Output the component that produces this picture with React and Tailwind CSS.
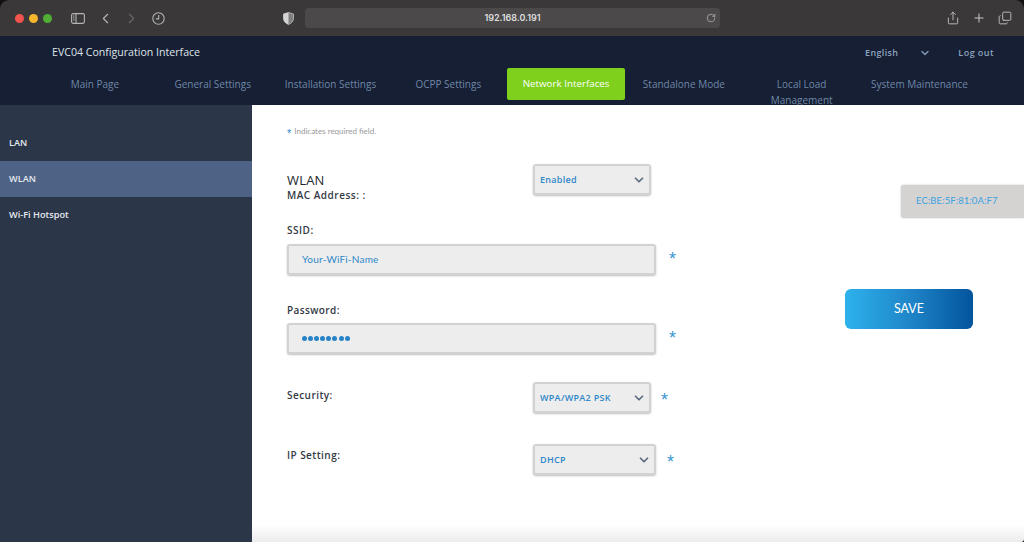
import React from "react";
import { ChevronLeft, ChevronRight, ChevronDown, Plus, RotateCw, Share, Copy } from "lucide-react";

const sans = "font-['Open_Sans','Noto_Sans',sans-serif]";
const nav = ["Main Page", "General Settings", "Installation Settings", "OCPP Settings", "Network Interfaces", "Standalone Mode", "Local Load Management", "System Maintenance"];

function Star({ className = "" }) {
  return <span className={`text-[#3b97d3] text-[18px] leading-none font-['Liberation_Sans',sans-serif] h-[12px] ${className}`}>*</span>;
}

function Select({ value, width }) {
  return (
    <div className={`${width} h-[31px] flex items-center justify-between pl-[5px] pr-[3px] bg-[#ededed] border-2 border-[#d2d2d2] rounded-[3px] shadow-[0_1px_2px_rgba(0,0,0,0.25)]`}>
      <span className="text-[9px] font-semibold tracking-[0.3px] text-[#2d87c9]">{value}</span>
      <ChevronDown size={14} strokeWidth={3} className="text-[#5d6b82]" />
    </div>
  );
}

function Input({ children }) {
  return (
    <div className="w-[369px] h-[31px] flex items-center pl-[13px] bg-[#ededed] border-2 border-[#d2d2d2] rounded-[3px] shadow-[0_1px_2px_rgba(0,0,0,0.25)]">
      {children}
    </div>
  );
}

export default function App() {
  return (
    <div className={`w-[1024px] h-[542px] overflow-hidden bg-[#111] ${sans}`}>
      <div className="h-[36px] bg-[#3a3839] rounded-t-[9px] flex items-center text-[#c9c9c9]">
        <div className="flex items-center gap-[5px] pl-[15px] w-[70px]">
          <span className="w-[9px] h-[9px] rounded-full bg-[#f0544c]" />
          <span className="w-[9px] h-[9px] rounded-full bg-[#f5b62d]" />
          <span className="w-[9px] h-[9px] rounded-full bg-[#4fae33]" />
        </div>
        <svg width="14" height="11" viewBox="0 0 14 11" fill="none" stroke="#b5b5b5" strokeWidth="1.1" className="ml-[1px]">
          <rect x="0.6" y="0.6" width="12.8" height="9.8" rx="1.6" />
          <path d="M5 0.6V10.4" />
          <path d="M2 3h1.5M2 5h1.5M2 7h1.5" />
        </svg>
        <ChevronLeft size={17} strokeWidth={1.6} className="ml-[12px] text-[#b5b5b5]" />
        <ChevronRight size={17} strokeWidth={1.6} className="ml-[9px] text-[#6a6869]" />
        <svg width="13" height="13" viewBox="0 0 13 13" fill="none" stroke="#b5b5b5" strokeWidth="1.1" className="ml-[12px]">
          <circle cx="6.5" cy="6.5" r="5.7" />
          <path d="M6.7 3v3.9H3.9" />
        </svg>
        <svg width="11" height="13" viewBox="0 0 11 13" className="ml-[118px]">
          <path d="M5.5 0.5 L10.5 2 V6.5 C10.5 9.5 8 11.5 5.5 12.5 C3 11.5 0.5 9.5 0.5 6.5 V2 Z" fill="#7f7f7f" stroke="#c4c4c4" strokeWidth="0.8" />
          <path d="M5.5 0.5 L0.5 2 V6.5 C0.5 9.5 3 11.5 5.5 12.5 Z" fill="#d4d4d4" />
        </svg>
        <div className="ml-[11px] w-[415px] h-[20px] rounded-[4px] bg-[#4b494a] flex items-center justify-center relative">
          <span className="text-[9px] font-semibold text-[#dedede] font-['Inter',sans-serif]">192.168.0.191</span>
          <RotateCw size={10} strokeWidth={1.6} className="absolute right-[4px] top-[5px] text-[#c4c4c4]" />
        </div>
        <Share size={14} strokeWidth={1.5} className="ml-[226px] text-[#c9c9c9]" />
        <Plus size={14} strokeWidth={1.7} className="ml-[12px] text-[#c9c9c9]" />
        <Copy size={14} strokeWidth={1.5} className="ml-[12px] text-[#c9c9c9] -scale-x-100 rotate-180" />
      </div>

      <div className="h-[69px] bg-[#161f33] overflow-hidden">
        <div className="h-[32px] pt-[2px] flex items-center">
          <span className="ml-[52px] text-[10.6px] text-[#dfe3ea]">EVC04 Configuration Interface</span>
          <span className="ml-auto text-[9px] font-semibold tracking-[0.35px] text-[#8ea2bf]">English</span>
          <ChevronDown size={12} strokeWidth={3} className="ml-[21px] text-[#7f93b0]" />
          <span className="ml-[27px] mr-[30px] text-[9px] font-semibold tracking-[0.45px] text-[#8ea2bf]">Log out</span>
        </div>
        <div className="grid grid-cols-[repeat(8,117.8px)] pl-[36px]">
          {nav.map((n) =>
            n === "Network Interfaces" ? (
              <div key={n} className="h-[32px] flex items-center justify-center rounded-[2px] bg-[#7ed01c] text-[9.8px] text-white">{n}</div>
            ) : n === "Local Load Management" ? (
              <div key={n} className="h-[32px] px-[18px] pt-[8px] text-center text-[10px] leading-[16px] text-[#6f87a8]">{n}</div>
            ) : (
              <div key={n} className="h-[32px] pt-[8px] text-center whitespace-nowrap text-[10px] leading-[16px] text-[#6f87a8]">{n}</div>
            )
          )}
        </div>
      </div>

      <div className="h-[437px] flex">
        <aside className="w-[252px] shrink-0 bg-[#2b3648] pt-[20px]">
          {["LAN", "WLAN", "Wi-Fi Hotspot"].map((t) => (
            <div key={t} className={`h-[36px] flex items-center pl-[9px] text-[9.2px] font-semibold text-[#e6e9ee] ${t === "WLAN" ? "bg-[#4d6285]" : ""}`}>{t}</div>
          ))}
        </aside>
        <main className="flex-1 relative bg-gradient-to-b from-white from-[96%] to-[#ececec] rounded-br-[3px] pl-[35px] pt-[20px] flex">
          <div className="w-[436px] shrink-0 flex flex-col text-[#333a44]">
            <div className="h-[12px] flex items-center gap-[3px] font-['Lato',sans-serif] text-[8px] text-[#9a9a9a]">
              <span className="text-[#2d87c9] text-[11px] leading-none h-[7px] font-['Liberation_Sans',sans-serif]">*</span>
              Indicates required field.
            </div>
            <div className="flex justify-between w-[364px] mt-[27px] h-[41px]">
              <div className="pt-[8px]">
                <div className="text-[13px] leading-[17px] font-medium text-[#22272e] tracking-[0.2px]">WLAN</div>
                <div className="text-[10px] leading-[13px] font-semibold tracking-[0.5px]">MAC Address: :</div>
              </div>
              <Select value="Enabled" width="w-[118px]" />
            </div>
            <div className="mt-[18px] text-[10px] leading-[14px] font-semibold tracking-[0.5px]">SSID:</div>
            <div className="mt-[7px] flex items-center gap-[13px]">
              <Input><span className="font-['Lato',sans-serif] text-[10px] text-[#2d87c9] tracking-[0.2px]">Your-WiFi-Name</span></Input>
              <Star className="mb-[8px]" />
            </div>
            <div className="mt-[28px] text-[10px] leading-[14px] font-semibold tracking-[0.4px]">Password:</div>
            <div className="mt-[6px] flex items-center gap-[13px]">
              <Input>
                <span className="flex gap-[1.1px]">
                  {[0,1,2,3,4,5,6,7].map((i) => <span key={i} className="w-[5px] h-[5px] rounded-full bg-[#2583c6]" />)}
                </span>
              </Input>
              <Star className="mb-[8px]" />
            </div>
            <div className="mt-[28px] flex justify-between w-[381px] h-[31px]">
              <div className="pt-[6px] text-[10px] leading-[14px] font-semibold tracking-[0.45px]">Security:</div>
              <div className="flex items-center gap-[10px]">
                <Select value="WPA/WPA2 PSK" width="w-[118px]" />
                <Star className="mb-[2px]" />
              </div>
            </div>
            <div className="mt-[31px] flex h-[31px] w-[387px] justify-between">
              <div className="text-[10px] leading-[14px] font-semibold tracking-[0.45px] pt-[4px]">IP Setting:</div>
              <div className="flex items-center gap-[11px]">
                <Select value="DHCP" width="w-[123px]" />
                <Star className="mb-[2px]" />
              </div>
            </div>
          </div>
          <div className="flex-1 flex flex-col">
            <div className="ml-[178px] mt-[60px] h-[33px] flex items-center pl-[15px] bg-[#d5d2d2] rounded-l-[3px] shadow-[0_0_2px_rgba(0,0,0,0.25)] font-['Lato',sans-serif] text-[9.5px] text-[#3ba3e0] tracking-[0.1px]">EC:BE:5F:81:0A:F7</div>
            <div className="ml-[122px] mt-[71px] w-[128px] h-[40px] pt-[1px] flex items-center justify-center rounded-[6px] bg-gradient-to-r from-[#2db2ec] via-[#1f86c9] to-[#03549c] text-white text-[12.5px] font-['Lato',sans-serif]">SAVE</div>
          </div>
        </main>
      </div>
    </div>
  );
}
